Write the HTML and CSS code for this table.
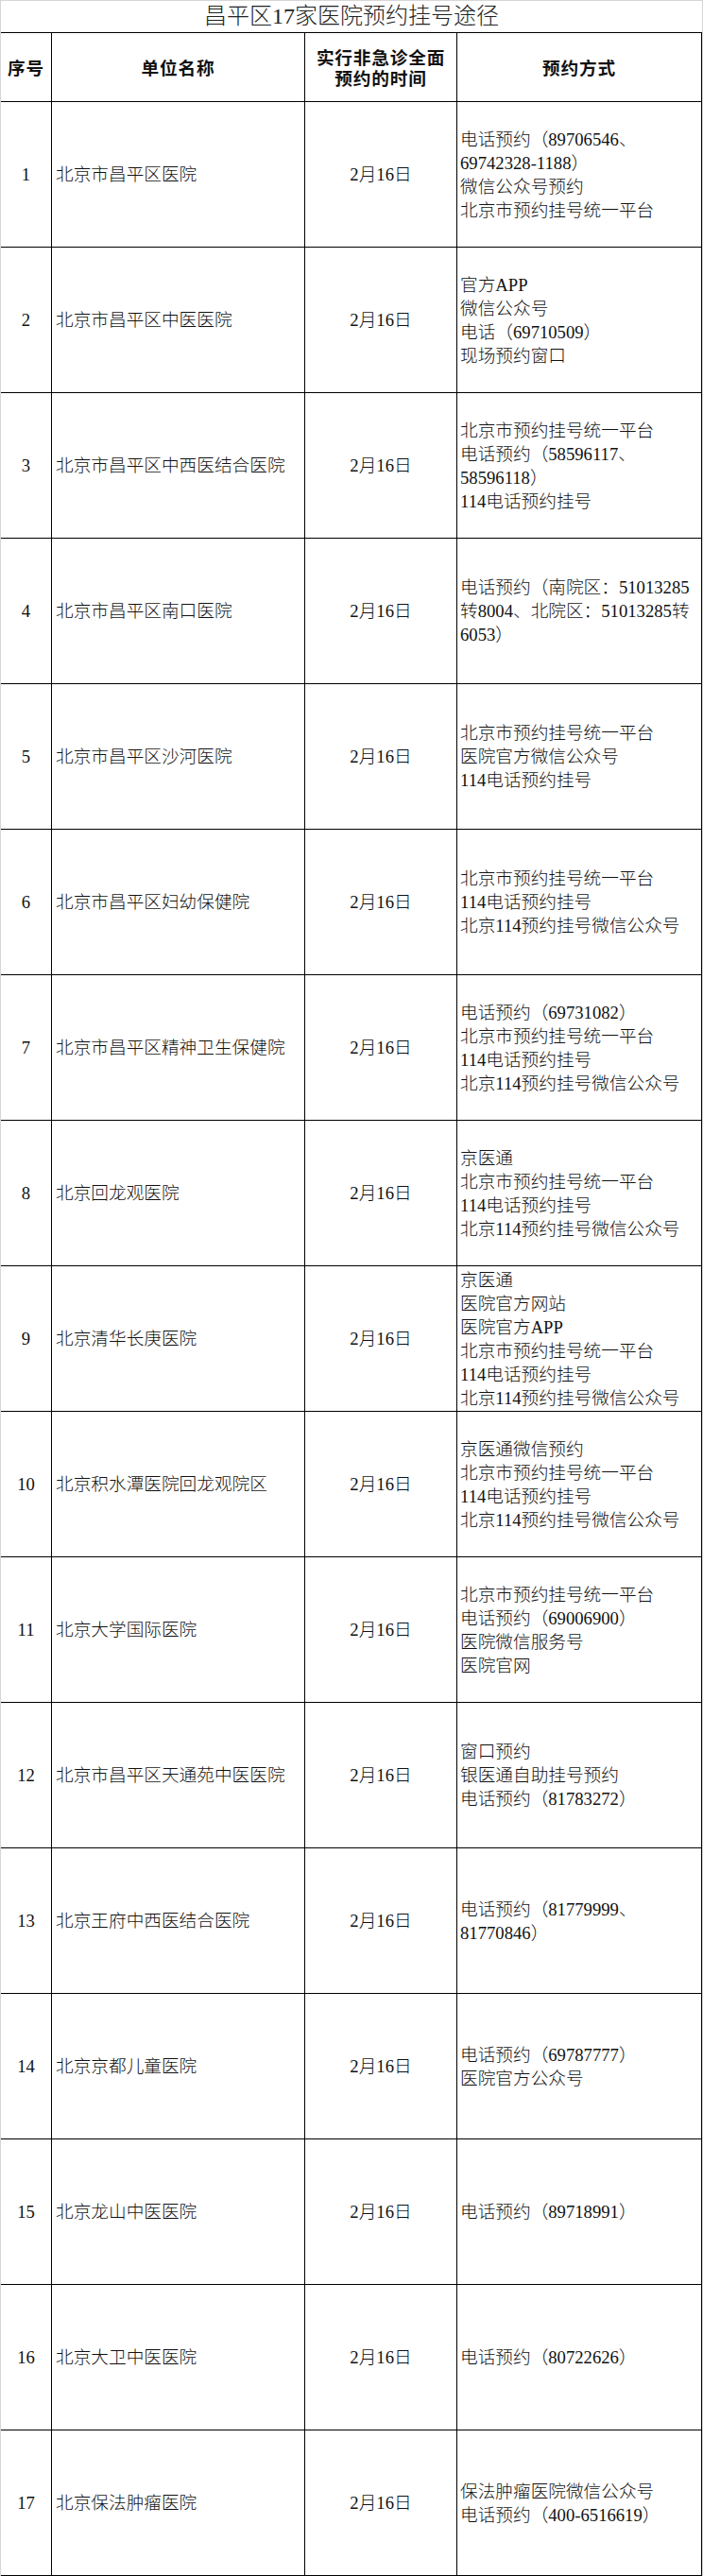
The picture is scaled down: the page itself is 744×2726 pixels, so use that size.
FILE: index.html
```html
<!DOCTYPE html>
<html lang="zh-CN">
<head>
<meta charset="utf-8">
<title>昌平区17家医院预约挂号途径</title>
<link rel="stylesheet" href="styles.css">
</head>
<body>
<div class="sheet">
  <div class="title"><span>昌平区17家医院预约挂号途径</span></div>

  <div class="hd"><span>序号</span></div>
  <div class="hd"><span>单位名称</span></div>
  <div class="hd"><span>实行非急诊全面<br>预约的时间</span></div>
  <div class="hd"><span>预约方式</span></div>

  <div class="c num"><span>1</span></div>
  <div class="c name"><span>北京市昌平区医院</span></div>
  <div class="c date"><span>2月16日</span></div>
  <div class="c way"><div class="lines">电话预约（89706546、<br>69742328-1188）<br>微信公众号预约<br>北京市预约挂号统一平台</div></div>

  <div class="c num"><span>2</span></div>
  <div class="c name"><span>北京市昌平区中医医院</span></div>
  <div class="c date"><span>2月16日</span></div>
  <div class="c way"><div class="lines">官方APP<br>微信公众号<br>电话（69710509）<br>现场预约窗口</div></div>

  <div class="c num"><span>3</span></div>
  <div class="c name"><span>北京市昌平区中西医结合医院</span></div>
  <div class="c date"><span>2月16日</span></div>
  <div class="c way"><div class="lines">北京市预约挂号统一平台<br>电话预约（58596117、<br>58596118）<br>114电话预约挂号</div></div>

  <div class="c num"><span>4</span></div>
  <div class="c name"><span>北京市昌平区南口医院</span></div>
  <div class="c date"><span>2月16日</span></div>
  <div class="c way"><div class="lines">电话预约（南院区：51013285<br>转8004、北院区：51013285转<br>6053）</div></div>

  <div class="c num"><span>5</span></div>
  <div class="c name"><span>北京市昌平区沙河医院</span></div>
  <div class="c date"><span>2月16日</span></div>
  <div class="c way"><div class="lines">北京市预约挂号统一平台<br>医院官方微信公众号<br>114电话预约挂号</div></div>

  <div class="c num"><span>6</span></div>
  <div class="c name"><span>北京市昌平区妇幼保健院</span></div>
  <div class="c date"><span>2月16日</span></div>
  <div class="c way"><div class="lines">北京市预约挂号统一平台<br>114电话预约挂号<br>北京114预约挂号微信公众号</div></div>

  <div class="c num"><span>7</span></div>
  <div class="c name"><span>北京市昌平区精神卫生保健院</span></div>
  <div class="c date"><span>2月16日</span></div>
  <div class="c way"><div class="lines">电话预约（69731082）<br>北京市预约挂号统一平台<br>114电话预约挂号<br>北京114预约挂号微信公众号</div></div>

  <div class="c num"><span>8</span></div>
  <div class="c name"><span>北京回龙观医院</span></div>
  <div class="c date"><span>2月16日</span></div>
  <div class="c way"><div class="lines">京医通<br>北京市预约挂号统一平台<br>114电话预约挂号<br>北京114预约挂号微信公众号</div></div>

  <div class="c num"><span>9</span></div>
  <div class="c name"><span>北京清华长庚医院</span></div>
  <div class="c date"><span>2月16日</span></div>
  <div class="c way"><div class="lines">京医通<br>医院官方网站<br>医院官方APP<br>北京市预约挂号统一平台<br>114电话预约挂号<br>北京114预约挂号微信公众号</div></div>

  <div class="c num"><span>10</span></div>
  <div class="c name"><span>北京积水潭医院回龙观院区</span></div>
  <div class="c date"><span>2月16日</span></div>
  <div class="c way"><div class="lines">京医通微信预约<br>北京市预约挂号统一平台<br>114电话预约挂号<br>北京114预约挂号微信公众号</div></div>

  <div class="c num"><span>11</span></div>
  <div class="c name"><span>北京大学国际医院</span></div>
  <div class="c date"><span>2月16日</span></div>
  <div class="c way"><div class="lines">北京市预约挂号统一平台<br>电话预约（69006900）<br>医院微信服务号<br>医院官网</div></div>

  <div class="c num"><span>12</span></div>
  <div class="c name"><span>北京市昌平区天通苑中医医院</span></div>
  <div class="c date"><span>2月16日</span></div>
  <div class="c way"><div class="lines">窗口预约<br>银医通自助挂号预约<br>电话预约（81783272）</div></div>

  <div class="c num"><span>13</span></div>
  <div class="c name"><span>北京王府中西医结合医院</span></div>
  <div class="c date"><span>2月16日</span></div>
  <div class="c way"><div class="lines">电话预约（81779999、<br>81770846）</div></div>

  <div class="c num"><span>14</span></div>
  <div class="c name"><span>北京京都儿童医院</span></div>
  <div class="c date"><span>2月16日</span></div>
  <div class="c way"><div class="lines">电话预约（69787777）<br>医院官方公众号</div></div>

  <div class="c num"><span>15</span></div>
  <div class="c name"><span>北京龙山中医医院</span></div>
  <div class="c date"><span>2月16日</span></div>
  <div class="c way"><div class="lines">电话预约（89718991）</div></div>

  <div class="c num"><span>16</span></div>
  <div class="c name"><span>北京大卫中医医院</span></div>
  <div class="c date"><span>2月16日</span></div>
  <div class="c way"><div class="lines">电话预约（80722626）</div></div>

  <div class="c num"><span>17</span></div>
  <div class="c name"><span>北京保法肿瘤医院</span></div>
  <div class="c date"><span>2月16日</span></div>
  <div class="c way"><div class="lines">保法肿瘤医院微信公众号<br>电话预约（400-6516619）</div></div>
</div>
</body>
</html>
```

FILE: styles.css
```css
* {
  box-sizing: border-box;
}

html, body {
  margin: 0;
  padding: 0;
  background: #ffffff;
}

.sheet {
  width: 744px;
  height: 2726px;
  border-top: 1px solid #d6d6d6;
  border-left: 1px solid #d6d6d6;
  border-right: 1px solid #d6d6d6;
  display: grid;
  grid-template-columns: 54px 268px 161px 259px;
  grid-template-rows: 34px 73px repeat(17, 154px);
  font-family: "Liberation Serif", "Noto Sans CJK SC", serif;
  color: #111111;
}

.title {
  grid-column: 1 / -1;
  border-bottom: 1px solid #000000;
  display: flex;
  align-items: center;
  justify-content: center;
  font-size: 24px;
  font-weight: 300;
  line-height: 28px;
  color: #222222;
  padding-bottom: 1px;
}

.hd {
  border-right: 1px solid #000000;
  border-bottom: 1px solid #000000;
  display: flex;
  align-items: center;
  justify-content: center;
  text-align: center;
  font-family: "Noto Sans CJK SC", sans-serif;
  font-weight: 700;
  font-size: 18.67px;
  letter-spacing: 0.8px;
  line-height: 22px;
  color: #111111;
}

.c {
  border-right: 1px solid #000000;
  border-bottom: 1px solid #000000;
  display: flex;
  align-items: center;
  font-size: 18.67px;
  font-weight: 300;
  line-height: 25px;
  white-space: nowrap;
  overflow: hidden;
}

.num {
  justify-content: center;
}

.name {
  justify-content: flex-start;
  padding-left: 4px;
}

.date {
  justify-content: center;
}

.way {
  justify-content: flex-start;
  padding-left: 3px;
}

.lines {
  text-align: left;
}
```
